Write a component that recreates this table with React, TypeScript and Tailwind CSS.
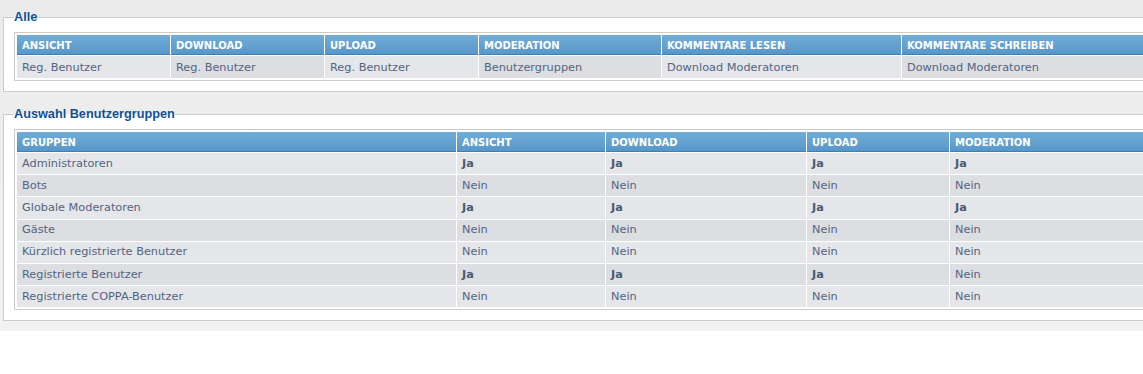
import React from 'react';

type Cell = { text: string; bold?: boolean };

const allHeaders = [
  { label: 'Ansicht', w: 'w-[153px]' },
  { label: 'Download', w: 'w-[153px]' },
  { label: 'Upload', w: 'w-[153px]' },
  { label: 'Moderation', w: 'w-[182px]' },
  { label: 'Kommentare lesen', w: 'w-[239px]' },
  { label: 'Kommentare schreiben', w: 'w-[287px]' },
];

const allRow = [
  'Reg. Benutzer',
  'Reg. Benutzer',
  'Reg. Benutzer',
  'Benutzergruppen',
  'Download Moderatoren',
  'Download Moderatoren',
];

const groupHeaders = [
  { label: 'Gruppen', w: 'w-[439px]' },
  { label: 'Ansicht', w: 'w-[148px]' },
  { label: 'Download', w: 'w-[200px]' },
  { label: 'Upload', w: 'w-[142px]' },
  { label: 'Moderation', w: 'w-[239px]' },
];

const yes: Cell = { text: 'Ja', bold: true };
const no: Cell = { text: 'Nein' };

const groups: { name: string; perms: Cell[] }[] = [
  { name: 'Administratoren', perms: [yes, yes, yes, yes] },
  { name: 'Bots', perms: [no, no, no, no] },
  { name: 'Globale Moderatoren', perms: [yes, yes, yes, yes] },
  { name: 'Gäste', perms: [no, no, no, no] },
  { name: 'Kürzlich registrierte Benutzer', perms: [no, no, no, no] },
  { name: 'Registrierte Benutzer', perms: [yes, yes, yes, no] },
  { name: 'Registrierte COPPA-Benutzer', perms: [no, no, no, no] },
];

const HeaderCell: React.FC<{ label: string; w: string }> = ({ label, w }) => (
  <th
    className={`${w} h-[20px] p-0 pt-[2px] pl-[5px] text-left align-middle text-[10px] font-bold uppercase text-white bg-linear-to-b from-[#72add7] to-[#5797c9] border-b border-[#3f7db3]`}
  >
    {label}
  </th>
);

const Panel: React.FC<{ title: string; children: React.ReactNode }> = ({ title, children }) => (
  <fieldset className="w-[1200px] border border-[#cccccc] bg-white px-[10px] pt-[7px] pb-[10px]">
    <legend className="px-0 text-[12.7px] leading-[16px] font-bold text-[#115098] font-['Liberation_Sans',Arial,sans-serif]">
      {title}
    </legend>
    {children}
  </fieldset>
);

export default function App() {
  return (
    <div className="w-full overflow-hidden bg-white font-['DejaVu_Sans',Verdana,sans-serif]">
      <div className="flex w-[1300px] flex-col gap-[14px] bg-linear-to-b from-[#ebebeb] to-[#f2f2f2] pl-[3px] pt-[9px] pb-[10px]">
        <Panel title="Alle">
          <table className="w-[1178px] table-fixed border-separate border-spacing-px border border-[#cccccc] bg-white p-px">
            <thead>
              <tr>
                {allHeaders.map((h) => (
                  <HeaderCell key={h.label} label={h.label} w={h.w} />
                ))}
              </tr>
            </thead>
            <tbody>
              <tr>
                {allRow.map((t, i) => (
                  <td
                    key={i}
                    className={`h-[22px] p-0 pt-[2px] pl-[5px] align-middle text-[11.3px] text-[#536482] ${
                      i % 2 === 0 ? 'bg-[#e4e6e9]' : 'bg-[#dcdee2]'
                    }`}
                  >
                    {t}
                  </td>
                ))}
              </tr>
            </tbody>
          </table>
        </Panel>

        <Panel title="Auswahl Benutzergruppen">
          <table className="w-[1178px] table-fixed border-separate border-spacing-px border border-[#cccccc] bg-white p-px">
            <thead>
              <tr>
                {groupHeaders.map((h) => (
                  <HeaderCell key={h.label} label={h.label} w={h.w} />
                ))}
              </tr>
            </thead>
            <tbody>
              {groups.map((g, r) => (
                <tr key={g.name} className={r % 2 === 0 ? 'bg-[#e4e6e9]' : 'bg-[#dcdee2]'}>
                  <td className="h-[21.2px] p-0 pt-[1px] pl-[5px] align-middle text-[11.3px] text-[#536482]">{g.name}</td>
                  {g.perms.map((c, i) => (
                    <td
                      key={i}
                      className={`h-[21.2px] p-0 pt-[1px] pl-[5px] align-middle text-[11.3px] ${
                        c.bold ? 'font-bold text-[#4a5a73]' : 'text-[#536482]'
                      }`}
                    >
                      {c.text}
                    </td>
                  ))}
                </tr>
              ))}
            </tbody>
          </table>
        </Panel>
      </div>
    </div>
  );
}
